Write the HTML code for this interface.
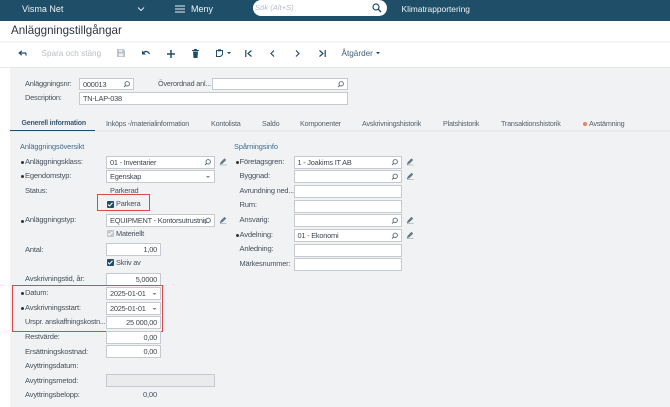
<!DOCTYPE html>
<html><head><meta charset="utf-8"><style>
html,body{margin:0;padding:0;background:#fff}
#p{position:relative;width:670px;height:407px;overflow:hidden;background:#fff;font-family:"Liberation Sans",sans-serif;filter:blur(.35px)}
#p>*{position:absolute}
.t{font-size:8px;line-height:10px;height:10px;white-space:nowrap;color:#46515c;letter-spacing:-.2px}
.n{letter-spacing:0}
.tab{font-size:7.2px;letter-spacing:-.2px;color:#55606b;line-height:10px;top:118.5px;white-space:nowrap}
.i{background:#fff;border:1px solid #c5cad0;border-bottom-width:1.5px;box-sizing:border-box;height:13px;font-size:7.4px;letter-spacing:-.22px;line-height:11.5px;color:#3d4650;padding:0 3px;white-space:nowrap;overflow:hidden}
.r{text-align:right}
.b{width:3px;height:3px;border-radius:50%;background:#333}
.ch{width:7.4px;height:7.4px;background:#1f4e68;border-radius:1px}
svg{overflow:visible}
</style></head><body><div id="p">
<div style="left:0;top:0;width:670px;height:20.5px;background:#1f4e68"></div>
<div class="t n" style="left:22px;top:4px;color:#eef3f6;font-size:9px">Visma Net</div>
<svg style="left:137px;top:6px" width="8" height="6"><path d="M1 1.5L4 4.5L7 1.5" fill="none" stroke="#dfe7ec" stroke-width="1"/></svg>
<svg style="left:175px;top:5px" width="10" height="8"><path d="M0 1H10M0 4H10M0 7H10" stroke="#e8eef2" stroke-width="1"/></svg>
<div class="t n" style="left:191px;top:4px;color:#eef3f6;font-size:9px">Meny</div>
<div style="left:252.5px;top:0;width:134.5px;height:16px;background:#fff;border-radius:8px"></div>
<div class="t n" style="left:255px;top:3px;color:#b7bdc3;font-style:italic;font-size:7.6px">Sök (Alt+S)</div>
<svg style="left:372px;top:3px" width="10" height="10"><circle cx="4" cy="4" r="3" fill="none" stroke="#1f4e68" stroke-width="1.2"/><path d="M6.3 6.3L9 9" stroke="#1f4e68" stroke-width="1.4"/></svg>
<div class="t n" style="left:401.5px;top:4px;color:#eef3f6;font-size:8.4px">Klimatrapportering</div>

<div class="t n" style="left:11px;top:23.5px;font-size:11.6px;height:13px;line-height:13px;color:#2c3540">Anläggningstillgångar</div>
<div style="left:0;top:41px;width:670px;height:2px;background:#f3f4f5"></div>
<div style="left:0;top:66.5px;width:670px;height:1px;background:#e4e6e8"></div>
<div style="left:10px;top:67.5px;width:660px;height:340px;background:#f1f2f4"></div>

<svg style="left:18px;top:49.5px" width="9" height="7"><path d="M8 3H1.5M3.8 .8L1.2 3L3.8 5.2M8 3V5.5" fill="none" stroke="#1f4e68" stroke-width="1.2"/></svg>
<div class="t n" style="left:41.5px;top:48.5px;color:#b9bfc6;font-size:8.2px">Spara och stäng</div>
<svg style="left:117px;top:49px" width="8" height="8"><path d="M0 0H6.5L8 1.5V8H0Z" fill="#b9c2cb"/><rect x="2" y=".8" width="3.5" height="2" fill="#eef0f2"/><rect x="1.8" y="4.5" width="4.4" height="2.7" fill="#eef0f2"/></svg>
<svg style="left:142px;top:50px" width="8" height="6"><path d="M1 3C3 .8 6 .8 7.5 4" fill="none" stroke="#1f4e68" stroke-width="1.3"/><path d="M0 .5V4.5H4Z" fill="#1f4e68"/></svg>
<svg style="left:167px;top:49.5px" width="8" height="8"><path d="M4 0V8M0 4H8" stroke="#1f4e68" stroke-width="1.5"/></svg>
<svg style="left:192px;top:48.5px" width="7" height="9"><path d="M0 1.5H7M2.5 1.5V.5H4.5V1.5" fill="none" stroke="#1f4e68" stroke-width=".9"/><path d="M1 2.5H6L5.5 9H1.5Z" fill="#1f4e68"/></svg>
<svg style="left:216px;top:49px" width="7" height="8"><path d="M.5 1.5H6.5V5.5L4.5 7.5H.5Z" fill="none" stroke="#1f4e68" stroke-width="1"/><rect x="2" y=".3" width="3" height="2" fill="#1f4e68"/></svg>
<svg style="left:227px;top:52px" width="4" height="3"><path d="M0 0H4L2 2.2Z" fill="#1f4e68"/></svg>
<svg style="left:245px;top:49.5px" width="7" height="7"><path d="M.8 0V7" stroke="#1f4e68" stroke-width="1.2"/><path d="M6.5 .5L3 3.5L6.5 6.5" fill="none" stroke="#1f4e68" stroke-width="1.2"/></svg>
<svg style="left:270px;top:49.5px" width="5" height="7"><path d="M4 .5L1 3.5L4 6.5" fill="none" stroke="#1f4e68" stroke-width="1.2"/></svg>
<svg style="left:295px;top:49.5px" width="5" height="7"><path d="M1 .5L4 3.5L1 6.5" fill="none" stroke="#1f4e68" stroke-width="1.2"/></svg>
<svg style="left:319px;top:49.5px" width="7" height="7"><path d="M6.2 0V7" stroke="#1f4e68" stroke-width="1.2"/><path d="M.5 .5L4 3.5L.5 6.5" fill="none" stroke="#1f4e68" stroke-width="1.2"/></svg>
<div class="t n" style="left:341.5px;top:48.5px;color:#3f5f78;font-size:8.2px">Åtgärder</div>
<svg style="left:376px;top:52px" width="4" height="3"><path d="M0 0H4L2 2.2Z" fill="#1f4e68"/></svg>

<div class="t" style="left:25px;top:78.5px;font-size:7.4px">Anläggningsnr:</div>
<div class="i" style="left:79px;top:77.5px;width:55px;height:12.5px">000013</div>
<div class="t" style="left:158px;top:78.5px;font-size:7.2px;letter-spacing:-.15px">Överordnad anl...</div>
<div class="i" style="left:212px;top:77.5px;width:135.5px;height:12.5px"></div>
<div class="t" style="left:25px;top:93px;font-size:7.4px">Description:</div>
<div class="i" style="left:79px;top:92px;width:268.5px">TN-LAP-038</div>

<div style="left:10px;top:129.5px;width:660px;height:2.5px;background:#e8eaec"></div>
<div style="left:10px;top:129.5px;width:84.5px;height:1.5px;background:#1f4e68"></div>
<div class="tab" style="left:21.5px;font-weight:bold;color:#3a5a72;font-size:7px">Generell information</div>
<div class="tab" style="left:106px">Inköps -/materialinformation</div>
<div class="tab" style="left:211px">Kontolista</div>
<div class="tab" style="left:262px">Saldo</div>
<div class="tab" style="left:300px">Komponenter</div>
<div class="tab" style="left:362px">Avskrivningshistorik</div>
<div class="tab" style="left:443px">Platshistorik</div>
<div class="tab" style="left:501px">Transaktionshistorik</div>
<div style="left:582.5px;top:121.5px;width:4.5px;height:4.5px;border-radius:50%;background:#e8845a"></div>
<div class="tab" style="left:589px">Avstämning</div>

<div class="t" style="left:20px;top:141.5px;color:#3f6c8c;font-size:7.4px;letter-spacing:-.1px">Anläggningsöversikt</div>
<div class="t" style="left:234px;top:141.5px;color:#3f6c8c;font-size:7.4px;letter-spacing:-.1px">Spårningsinfo</div>

<div class="b" style="left:21px;top:160.5px"></div><div class="t" style="left:25px;top:156.5px;font-size:7.6px">Anläggningsklass:</div>
<div class="i" style="left:106px;top:155.5px;width:109px">01 - Inventarier</div>
<div class="b" style="left:21px;top:175px"></div><div class="t" style="left:25px;top:171px;font-size:7.6px">Egendomstyp:</div>
<div class="i" style="left:106px;top:170px;width:109px">Egenskap</div>
<div class="t" style="left:25px;top:185.5px;font-size:7.6px">Status:</div>
<div class="t" style="left:110px;top:186px;font-size:7.4px">Parkerad</div>
<div class="ch" style="left:106.5px;top:200.8px"></div>
<div class="t" style="left:116px;top:199px;font-size:7.4px">Parkera</div>
<div style="left:97px;top:194px;width:53px;height:17px;border:1px solid #e0454b;box-sizing:border-box"></div>
<div class="b" style="left:21px;top:219.5px"></div><div class="t" style="left:25px;top:215px;font-size:7.6px">Anläggningstyp:</div>
<div class="i" style="left:106px;top:214px;width:109px;padding-right:14px;">EQUIPMENT - Kontorsutrustnir</div>
<div class="ch" style="left:106.5px;top:230px;background:#c4c8cc"></div>
<div class="t" style="left:116px;top:228.5px;font-size:7.4px">Materiellt</div>
<div class="t" style="left:25px;top:244.5px;font-size:7.6px">Antal:</div>
<div class="i r" style="left:106px;top:243px;width:55px">1,00</div>
<div class="ch" style="left:106.5px;top:259px"></div>
<div class="t" style="left:116px;top:257.5px;font-size:7.4px">Skriv av</div>
<div class="t" style="left:25px;top:273.5px;font-size:7.6px">Avskrivningstid, år:</div>
<div class="i r" style="left:106px;top:272.5px;width:55px">5,0000</div>
<div class="b" style="left:21px;top:292px"></div><div class="t" style="left:25px;top:288px;font-size:7.6px">Datum:</div>
<div class="i" style="left:106px;top:287px;width:55px">2025-01-01</div>
<div class="b" style="left:21px;top:307px"></div><div class="t" style="left:25px;top:303px;font-size:7.6px">Avskrivningsstart:</div>
<div class="i" style="left:106px;top:301.5px;width:55px">2025-01-01</div>
<div class="t" style="left:25px;top:317px;font-size:7.3px">Urspr. anskaffningskostn...</div>
<div class="i r" style="left:106px;top:316px;width:55px">25 000,00</div>
<div style="left:12px;top:285px;width:150.5px;height:47px;border:1px solid #e0454b;box-sizing:border-box"></div>
<div class="t" style="left:25px;top:332px;font-size:7.6px">Restvärde:</div>
<div class="i r" style="left:106px;top:331px;width:55px">0,00</div>
<div class="t" style="left:25px;top:346.5px;font-size:7.6px">Ersättningskostnad:</div>
<div class="i r" style="left:106px;top:345px;width:55px">0,00</div>
<div class="t" style="left:25px;top:361px;font-size:7.6px">Avyttringsdatum:</div>
<div class="t" style="left:25px;top:376px;font-size:7.6px">Avyttringsmetod:</div>
<div class="i" style="left:106px;top:374px;width:109px;background:#e9ebed"></div>
<div class="t" style="left:25px;top:390px;font-size:7.6px">Avyttringsbelopp:</div>
<div class="t" style="left:143px;top:390px;font-size:7.6px">0,00</div>

<div class="b" style="left:235.5px;top:160.5px"></div><div class="t" style="left:239.5px;top:156.5px;font-size:7.6px">Företagsgren:</div>
<div class="i" style="left:293.5px;top:155.5px;width:108px">1 - Joakims IT AB</div>
<div class="t" style="left:239.5px;top:171px;font-size:7.6px">Byggnad:</div>
<div class="i" style="left:293.5px;top:170px;width:108px"></div>
<div class="t" style="left:239.5px;top:185.5px;font-size:7.4px">Avrundning ned...</div>
<div class="i" style="left:293.5px;top:185px;width:108px"></div>
<div class="t" style="left:239.5px;top:200px;font-size:7.6px">Rum:</div>
<div class="i" style="left:293.5px;top:199.5px;width:108px"></div>
<div class="t" style="left:239.5px;top:215px;font-size:7.6px">Ansvarig:</div>
<div class="i" style="left:293.5px;top:214px;width:108px"></div>
<div class="b" style="left:235.5px;top:233.5px"></div><div class="t" style="left:239.5px;top:229.5px;font-size:7.6px">Avdelning:</div>
<div class="i" style="left:293.5px;top:229px;width:108px">01 - Ekonomi</div>
<div class="t" style="left:239.5px;top:244px;font-size:7.6px">Anledning:</div>
<div class="i" style="left:293.5px;top:243.5px;width:108px"></div>
<div class="t" style="left:239.5px;top:258.5px;font-size:7.4px">Märkesnummer:</div>
<div class="i" style="left:293.5px;top:258px;width:108px"></div>

<svg style="left:0;top:0" width="670" height="407">
<defs>
<g id="m"><circle cx="3.2" cy="2.8" r="2.2" fill="none" stroke="#5a6b78" stroke-width=".9"/><path d="M1.6 4.5L0 6" stroke="#5a6b78" stroke-width="1"/></g>
<g id="e"><path d="M0 6L1 3.5L4.5 0L6 1.5L2.5 5ZM0 6.5H6.5" fill="#667a88" stroke="#667a88" stroke-width=".4"/></g>
<path id="c" d="M0 0H4L2 2Z" fill="#7a8792"/>
<path id="k" d="M1.2 3.5L2.8 5L5.8 1.8" fill="none" stroke="#fff" stroke-width="1.1"/>
</defs>
<use href="#m" x="124" y="81"/><use href="#m" x="338" y="81"/>
<use href="#m" x="205" y="159"/><use href="#m" x="205" y="217.5"/>
<use href="#m" x="392" y="159"/><use href="#m" x="392" y="173.5"/><use href="#m" x="392" y="217.5"/><use href="#m" x="392" y="232.5"/>
<use href="#e" x="220" y="158.5"/><use href="#e" x="220" y="217"/>
<use href="#e" x="407" y="158.5"/><use href="#e" x="407" y="173"/><use href="#e" x="407" y="217"/><use href="#e" x="407" y="232"/>
<use href="#c" x="206" y="176"/><use href="#c" x="152.5" y="293"/><use href="#c" x="152.5" y="308"/>
<use href="#k" x="106.7" y="201"/><use href="#k" x="106.7" y="230"/><use href="#k" x="106.7" y="259"/>
</svg>
</div></body></html>
